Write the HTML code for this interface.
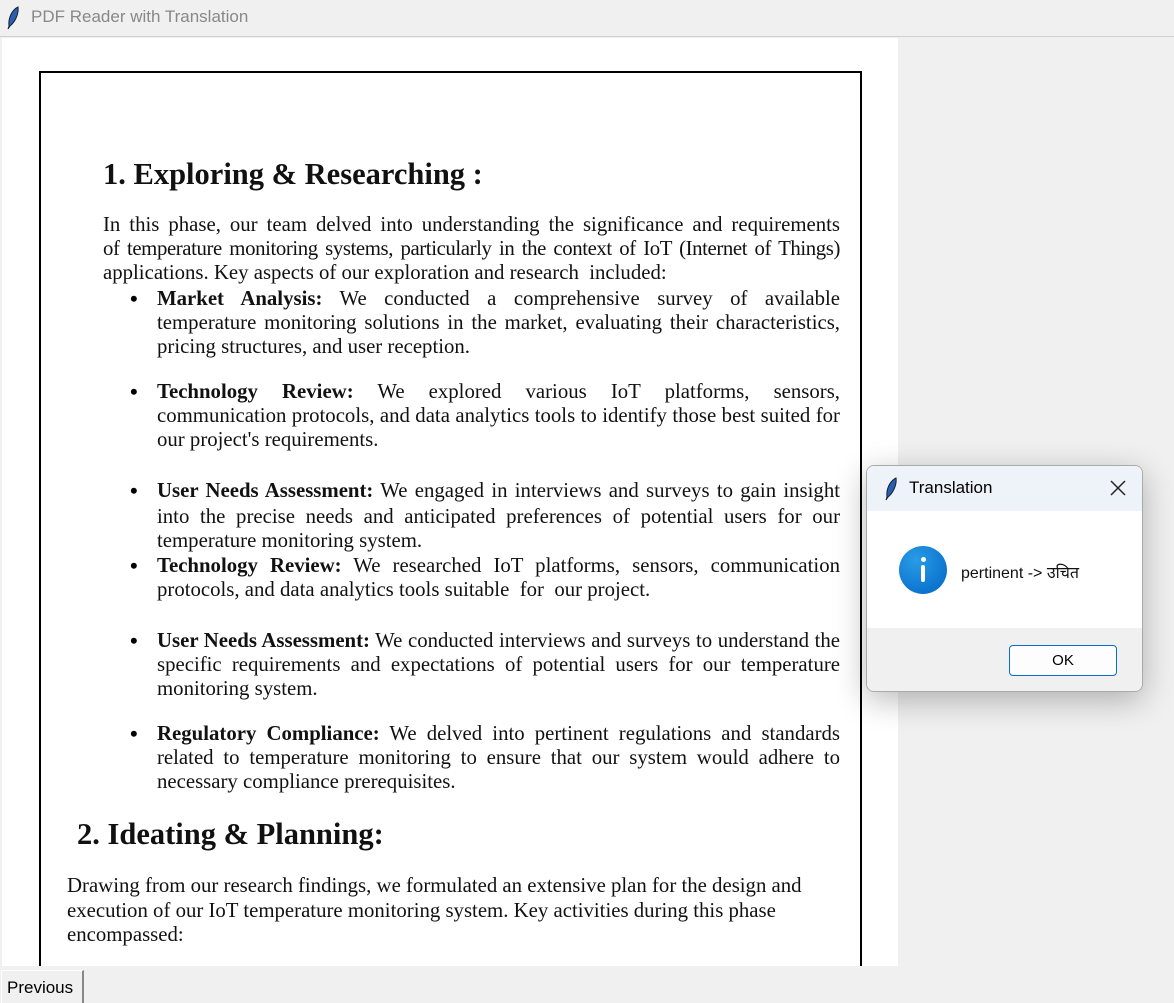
<!DOCTYPE html>
<html><head><meta charset="utf-8"><style>
body{margin:0;width:1174px;height:1002px;background:#f0f0f0;position:relative;overflow:hidden;font-family:"Liberation Serif",serif;}
.t{position:absolute;white-space:nowrap;font-size:20.8px;color:#111;line-height:24px;}
.j{text-align:justify;text-align-last:justify;white-space:normal;height:24px;overflow:visible;}
.b{position:absolute;font-size:22px;line-height:24px;font-weight:bold;}
h1{position:absolute;margin:0;font-size:30.5px;font-weight:bold;line-height:34px;color:#111;white-space:nowrap;}
</style></head><body>
<div style="position:absolute;left:0;top:0;width:1174px;height:36px;background:#f0f0f0;border-bottom:1px solid #d0d0d0"></div>
<svg style="position:absolute;left:6px;top:6px" width="14" height="24" viewBox="0 0 14 24"><path d="M12 1 C6 4 2 12 3 20 L2 23 L4 20 C9 16 13 8 12 1Z" fill="#2a5fb0" stroke="#123" stroke-width="1"/></svg>
<div style="position:absolute;left:31px;top:7px;font:17px 'Liberation Sans',sans-serif;color:#888">PDF Reader with Translation</div>
<div style="position:absolute;left:2px;top:38px;width:896px;height:928px;background:#fff"></div>
<div style="position:absolute;left:39px;top:71px;width:819px;height:920px;border:2px solid #000;border-bottom:none"></div>

<h1 style="left:103px;top:157px">1. Exploring &amp; Researching :</h1>
<div class="t j" style="left:103px;top:213px;width:737px">In this phase, our team delved into understanding the significance and requirements</div>
<div class="t j" style="left:103px;top:237px;width:737px;letter-spacing:-0.4px">of temperature monitoring systems, particularly in the context of IoT (Internet of Things)</div>
<div class="t" style="left:103px;top:261px">applications. Key aspects of our exploration and research &nbsp;included:</div>

<div class="b" style="left:130px;top:287px">•</div>
<div class="t j" style="left:157px;top:287px;width:683px"><b>Market Analysis:</b> We conducted a comprehensive survey of available</div>
<div class="t j" style="left:157px;top:311px;width:683px">temperature monitoring solutions in the market, evaluating their characteristics,</div>
<div class="t" style="left:157px;top:335px">pricing structures, and user reception.</div>

<div class="b" style="left:130px;top:380px">•</div>
<div class="t j" style="left:157px;top:380px;width:683px"><b>Technology Review:</b> We explored various IoT platforms, sensors,</div>
<div class="t j" style="left:157px;top:404px;width:683px">communication protocols, and data analytics tools to identify those best suited for</div>
<div class="t" style="left:157px;top:428px">our project's requirements.</div>

<div class="b" style="left:130px;top:479px">•</div>
<div class="t j" style="left:157px;top:479px;width:683px"><b>User Needs Assessment:</b> We engaged in interviews and surveys to gain insight</div>
<div class="t j" style="left:157px;top:505px;width:683px">into the precise needs and anticipated preferences of potential users for our</div>
<div class="t" style="left:157px;top:529px">temperature monitoring system.</div>
<div class="b" style="left:130px;top:554px">•</div>
<div class="t j" style="left:157px;top:554px;width:683px"><b>Technology Review:</b> We researched IoT platforms, sensors, communication</div>
<div class="t" style="left:157px;top:578px">protocols, and data analytics tools suitable &nbsp;for &nbsp;our project.</div>

<div class="b" style="left:130px;top:629px">•</div>
<div class="t j" style="left:157px;top:629px;width:683px"><b>User Needs Assessment:</b> We conducted interviews and surveys to understand the</div>
<div class="t j" style="left:157px;top:653px;width:683px">specific requirements and expectations of potential users for our temperature</div>
<div class="t" style="left:157px;top:677px">monitoring system.</div>

<div class="b" style="left:130px;top:722px">•</div>
<div class="t j" style="left:157px;top:722px;width:683px"><b>Regulatory Compliance:</b> We delved into pertinent regulations and standards</div>
<div class="t j" style="left:157px;top:746px;width:683px">related to temperature monitoring to ensure that our system would adhere to</div>
<div class="t" style="left:157px;top:770px">necessary compliance prerequisites.</div>

<h1 style="left:77px;top:817px">2. Ideating &amp; Planning:</h1>
<div class="t" style="left:67px;top:874px">Drawing from our research findings, we formulated an extensive plan for the design and</div>
<div class="t" style="left:67px;top:899px">execution of our IoT temperature monitoring system. Key activities during this phase</div>
<div class="t" style="left:67px;top:923px">encompassed:</div>

<div style="position:absolute;left:0;top:966px;width:1174px;height:36px;background:#f0f0f0"></div>
<div style="position:absolute;left:1px;top:970px;width:80px;height:32px;border-top:1px solid #fff;border-left:1px solid #fff;border-right:2px solid #888;background:#f0f0f0"></div>
<div style="position:absolute;left:7px;top:978px;font:17px 'Liberation Sans',sans-serif;color:#000">Previous</div>

<div style="position:absolute;left:866px;top:465px;width:275px;height:225px;border:1px solid #aaa;border-radius:8px;background:#fff;box-shadow:0 8px 32px rgba(0,0,0,.28);overflow:hidden">
 <div style="height:45px;background:#eef2f9"></div>
 <svg style="position:absolute;left:17px;top:11px" width="14" height="24" viewBox="0 0 14 24"><path d="M12 1 C6 4 2 12 3 20 L2 23 L4 20 C9 16 13 8 12 1Z" fill="#2a5fb0" stroke="#123" stroke-width="1"/></svg>
 <div style="position:absolute;left:42px;top:12px;font:17px 'Liberation Sans',sans-serif;color:#000">Translation</div>
 <svg style="position:absolute;left:243px;top:14px" width="16" height="16"><path d="M1 1L15 15M15 1L1 15" stroke="#222" stroke-width="1.5"/></svg>
 <div style="position:absolute;left:32px;top:80px;width:48px;height:48px;border-radius:50%;background:radial-gradient(circle at 35% 30%,#2a9be6,#0066c6)"></div>
 <div style="position:absolute;left:54px;top:91px;width:5px;height:5px;background:#fff;border-radius:50%"></div>
 <div style="position:absolute;left:54px;top:99px;width:4px;height:17px;background:#fff;border-radius:2px"></div>
 <div style="position:absolute;left:94px;top:95px;font:16px 'Liberation Sans',sans-serif;color:#111">pertinent -&gt; उचित</div>
 <div style="position:absolute;left:0;top:162px;width:275px;height:63px;background:#f0f0f0"></div>
 <div style="position:absolute;left:142px;top:179px;width:106px;height:29px;border:1px solid #0a6cd0;border-radius:4px;background:#fdfdfd;font:15px 'Liberation Sans',sans-serif;text-align:center;line-height:29px">OK</div>
</div>
</body></html>
